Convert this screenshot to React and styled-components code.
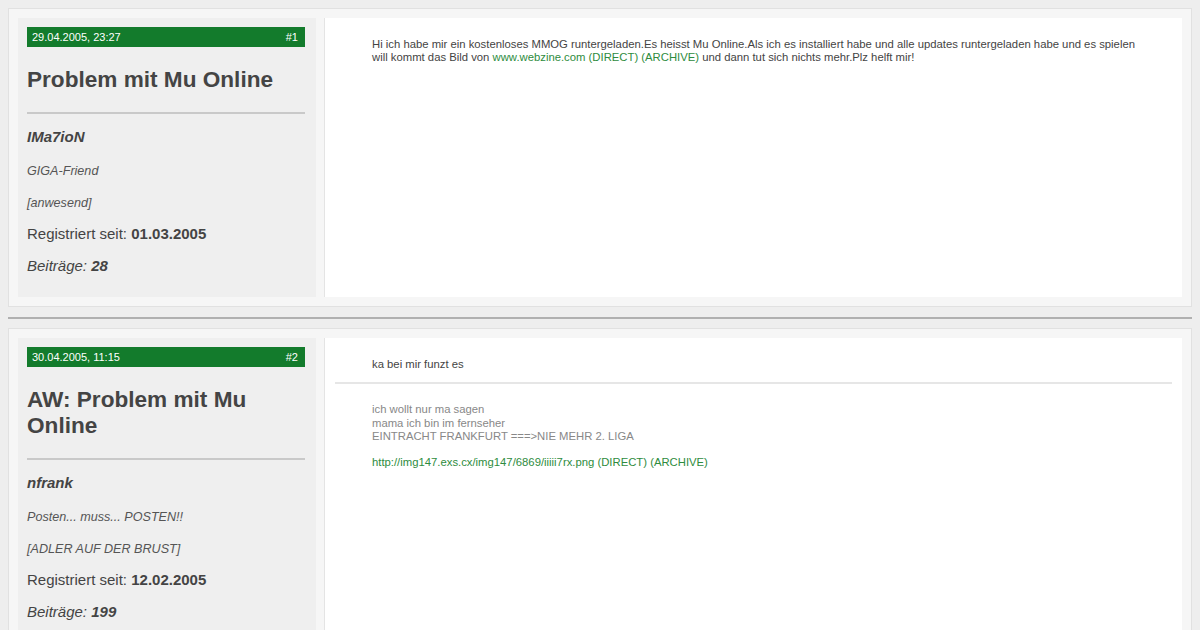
import React from "react";
import styled, { createGlobalStyle } from "styled-components";

const Global = createGlobalStyle`
  html, body { margin: 0; padding: 0; }
  body {
    background: #eeeeee;
    font-family: "Liberation Sans", Arial, sans-serif;
    padding: 8px;
  }
  * { box-sizing: border-box; }
`;

const Post = styled.div`
  display: flex;
  gap: 8px;
  padding: 9px;
  background: #f6f6f6;
  border: 1px solid #e1e1e1;
`;

const Sidebar = styled.div`
  width: 298px;
  flex: none;
  background: #efefef;
  padding: 9px 11px 21px 9px;
`;

const DateBar = styled.div`
  height: 20px;
  background: #137b2c;
  color: #fff;
  font-size: 11px;
  display: flex;
  align-items: center;
  justify-content: space-between;
  padding: 0 7px 0 5px;
`;

const Title = styled.h2`
  margin: 20px 0 19px;
  font-size: 22.6px;
  line-height: 26px;
  font-weight: bold;
  color: #444;
`;

const Rule = styled.div`
  height: 2px;
  background: #c9c9c9;
  margin-bottom: 13px;
`;

const Info = styled.div`
  line-height: 20px;
  margin-bottom: ${(p) => p.$gap ?? 12}px;
  color: ${(p) => (p.$small ? "#555" : "#444")};
  font-size: ${(p) => (p.$small ? "12.6px" : "15px")};
  font-style: ${(p) => (p.$italic ? "italic" : "normal")};
  font-weight: ${(p) => (p.$bold ? "bold" : "normal")};
  &:last-child { margin-bottom: 0; }
  b { font-weight: bold; }
`;

const Content = styled.div`
  flex: 1;
  background: #fff;
  border-left: 1px solid #e4e4e4;
  padding: 10px;
`;

const Message = styled.div`
  padding: 10px 37px 11px;
  font-size: 11.3px;
  line-height: 13.3px;
  color: #444;
`;

const SigRule = styled.div`
  height: 2px;
  background: #e6e6e6;
`;

const Signature = styled.div`
  padding: 19px 37px 20px;
  font-size: 11.3px;
  line-height: 13.2px;
  color: #888;
`;

const Link = styled.a`
  color: #2e8c3e;
  text-decoration: none;
`;

const Divider = styled.div`
  height: 2px;
  background: #b0b0b0;
  margin: 10px 0 9px;
`;

function PostSidebar({ date, num, title, user, rank, status, reg, posts }) {
  return (
    <Sidebar>
      <DateBar>
        <span>{date}</span>
        <span>{num}</span>
      </DateBar>
      <Title>{title}</Title>
      <Rule />
      <Info $italic $bold $gap={14}>{user}</Info>
      <Info $small $italic>{rank}</Info>
      <Info $small $italic $gap={11}>{status}</Info>
      <Info>
        Registriert seit: <b>{reg}</b>
      </Info>
      <Info $italic>
        Beiträge: <b>{posts}</b>
      </Info>
    </Sidebar>
  );
}

export default function App() {
  return (
    <>
      <Global />
      <Post>
        <PostSidebar
          date="29.04.2005, 23:27"
          num="#1"
          title="Problem mit Mu Online"
          user="IMa7ioN"
          rank="GIGA-Friend"
          status="[anwesend]"
          reg="01.03.2005"
          posts="28"
        />
        <Content>
          <Message>
            Hi ich habe mir ein kostenloses MMOG runtergeladen.Es heisst Mu
            Online.Als ich es installiert habe und alle updates runtergeladen
            habe und es spielen will kommt das Bild von{" "}
            <Link href="#">www.webzine.com (DIRECT) (ARCHIVE)</Link> und dann
            tut sich nichts mehr.Plz helft mir!
          </Message>
        </Content>
      </Post>
      <Divider />
      <Post>
        <PostSidebar
          date="30.04.2005, 11:15"
          num="#2"
          title="AW: Problem mit Mu Online"
          user="nfrank"
          rank="Posten... muss... POSTEN!!"
          status="[ADLER AUF DER BRUST]"
          reg="12.02.2005"
          posts="199"
        />
        <Content>
          <Message>ka bei mir funzt es</Message>
          <SigRule />
          <Signature>
            ich wollt nur ma sagen
            <br />
            mama ich bin im fernseher
            <br />
            EINTRACHT FRANKFURT ===&gt;NIE MEHR 2. LIGA
            <br />
            <br />
            <Link href="#">
              http://img147.exs.cx/img147/6869/iiiii7rx.png (DIRECT) (ARCHIVE)
            </Link>
          </Signature>
        </Content>
      </Post>
    </>
  );
}
